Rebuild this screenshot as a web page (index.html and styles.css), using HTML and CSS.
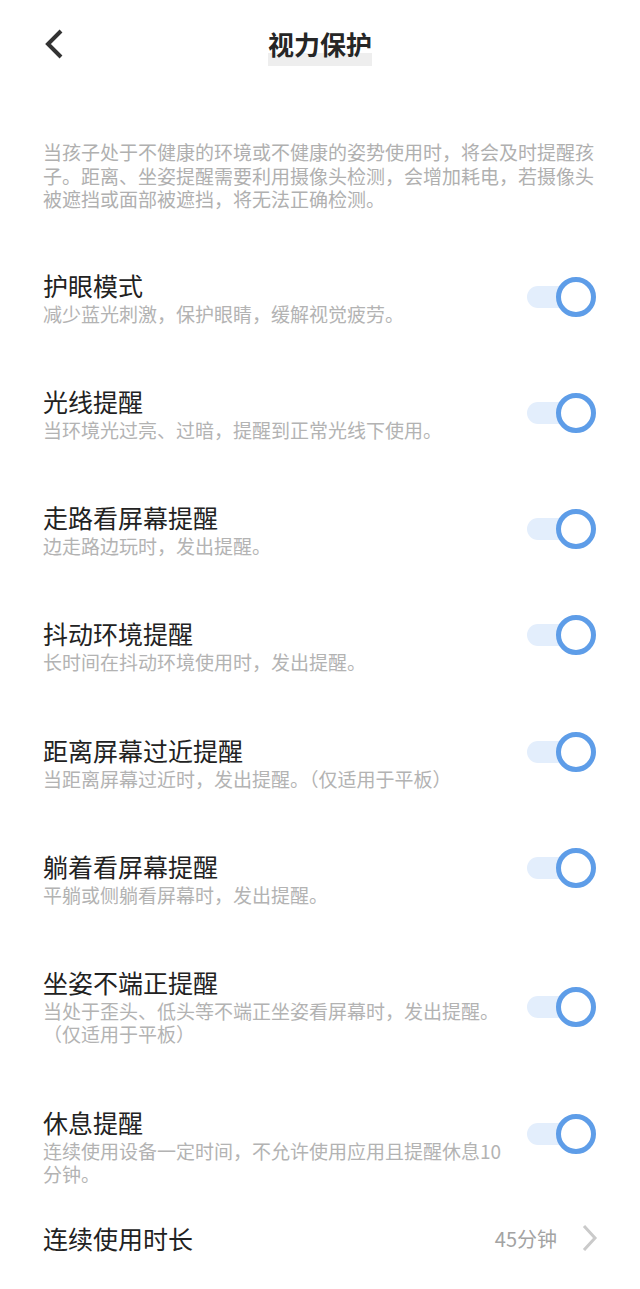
FILE: index.html
```html
<!DOCTYPE html>
<html>
<head>
    <title>视力保护</title>
    <link rel="stylesheet" href="styles.css">
</head>
<body>
    <div class="header">
        <div class="back">
            <svg width="24" height="32" viewBox="0 0 24 32"><polyline points="19,3 6,16 19,29" fill="none" stroke="#333" stroke-width="4"/></svg>
        </div>
        <h1 class="title">视力保护</h1>
        <div></div>
    </div>

    <p class="intro">当孩子处于不健康的环境或不健康的姿势使用时，将会及时提醒孩子。距离、坐姿提醒需要利用摄像头检测，会增加耗电，若摄像头被遮挡或面部被遮挡，将无法正确检测。</p>

    <div class="list">
        <div class="item">
            <div class="text">
                <div class="name">护眼模式</div>
                <div class="desc">减少蓝光刺激，保护眼睛，缓解视觉疲劳。</div>
            </div>
            <svg class="toggle" width="70" height="40" viewBox="0 0 70 40"><rect x="1" y="9" width="55" height="22" rx="11" fill="#e3eefc"/><circle cx="50" cy="20" r="17.5" fill="#fff" stroke="#5e9de8" stroke-width="5"/></svg>
        </div>
        <div class="item">
            <div class="text">
                <div class="name">光线提醒</div>
                <div class="desc">当环境光过亮、过暗，提醒到正常光线下使用。</div>
            </div>
            <svg class="toggle" width="70" height="40" viewBox="0 0 70 40"><rect x="1" y="9" width="55" height="22" rx="11" fill="#e3eefc"/><circle cx="50" cy="20" r="17.5" fill="#fff" stroke="#5e9de8" stroke-width="5"/></svg>
        </div>
        <div class="item">
            <div class="text">
                <div class="name">走路看屏幕提醒</div>
                <div class="desc">边走路边玩时，发出提醒。</div>
            </div>
            <svg class="toggle" width="70" height="40" viewBox="0 0 70 40"><rect x="1" y="9" width="55" height="22" rx="11" fill="#e3eefc"/><circle cx="50" cy="20" r="17.5" fill="#fff" stroke="#5e9de8" stroke-width="5"/></svg>
        </div>
        <div class="item">
            <div class="text">
                <div class="name">抖动环境提醒</div>
                <div class="desc">长时间在抖动环境使用时，发出提醒。</div>
            </div>
            <svg class="toggle toggle-up" width="70" height="40" viewBox="0 0 70 40"><rect x="1" y="9" width="55" height="22" rx="11" fill="#e3eefc"/><circle cx="50" cy="20" r="17.5" fill="#fff" stroke="#5e9de8" stroke-width="5"/></svg>
        </div>
        <div class="item">
            <div class="text">
                <div class="name">距离屏幕过近提醒</div>
                <div class="desc">当距离屏幕过近时，发出提醒。（仅适用于平板）</div>
            </div>
            <svg class="toggle toggle-up" width="70" height="40" viewBox="0 0 70 40"><rect x="1" y="9" width="55" height="22" rx="11" fill="#e3eefc"/><circle cx="50" cy="20" r="17.5" fill="#fff" stroke="#5e9de8" stroke-width="5"/></svg>
        </div>
        <div class="item">
            <div class="text">
                <div class="name">躺着看屏幕提醒</div>
                <div class="desc">平躺或侧躺看屏幕时，发出提醒。</div>
            </div>
            <svg class="toggle toggle-up" width="70" height="40" viewBox="0 0 70 40"><rect x="1" y="9" width="55" height="22" rx="11" fill="#e3eefc"/><circle cx="50" cy="20" r="17.5" fill="#fff" stroke="#5e9de8" stroke-width="5"/></svg>
        </div>
        <div class="item">
            <div class="text">
                <div class="name">坐姿不端正提醒</div>
                <div class="desc">当处于歪头、低头等不端正坐姿看屏幕时，发出提醒。（仅适用于平板）</div>
            </div>
            <svg class="toggle toggle-down" width="70" height="40" viewBox="0 0 70 40"><rect x="1" y="9" width="55" height="22" rx="11" fill="#e3eefc"/><circle cx="50" cy="20" r="17.5" fill="#fff" stroke="#5e9de8" stroke-width="5"/></svg>
        </div>
        <div class="item">
            <div class="text">
                <div class="name">休息提醒</div>
                <div class="desc">连续使用设备一定时间，不允许使用应用且提醒休息10分钟。</div>
            </div>
            <svg class="toggle" width="70" height="40" viewBox="0 0 70 40"><rect x="1" y="9" width="55" height="22" rx="11" fill="#e3eefc"/><circle cx="50" cy="20" r="17.5" fill="#fff" stroke="#5e9de8" stroke-width="5"/></svg>
        </div>
    </div>

    <div class="duration">
        <div class="name">连续使用时长</div>
        <div class="value">
            <span>45分钟</span>
            <svg width="18" height="28" viewBox="0 0 18 28"><polyline points="4,2 15,14 4,26" fill="none" stroke="#cacaca" stroke-width="3"/></svg>
        </div>
    </div>
</body>
</html>
```

FILE: styles.css
```css
body {
    margin: 0;
    background: #fff;
    font-family: "Noto Sans CJK SC", "Noto Sans", sans-serif;
    color: #222;
}

/* top bar */
.header {
    display: grid;
    grid-template-columns: 1fr auto 1fr;
    align-items: center;
    height: 88px;
}
.back {
    padding-left: 42px;
    display: flex;
    align-items: center;
}
.title {
    margin: 0;
    font-size: 26px;
    font-weight: bold;
    line-height: 30px;
    padding-bottom: 7px;
    color: #262626;
    background: linear-gradient(to bottom, transparent 24px, #eeeeee 24px);
    position: relative;
    top: 3px;
}

.intro {
    margin: 52px 0 0;
    padding: 0 43px;
    font-size: 19px;
    line-height: 23.5px;
    color: #b0b0b0;
}

/* switches list */
.list {
    display: flex;
    flex-direction: column;
    gap: 61.33px;
    margin-top: 59px;
}
.item {
    display: flex;
    align-items: flex-start;
    justify-content: space-between;
    padding: 0 44px 0 43px;
}
.text {
    width: 464px;
}
.name {
    font-size: 25px;
    line-height: 30px;
    color: #222;
}
.desc {
    margin-top: 2px;
    font-size: 19px;
    line-height: 23px;
    color: #b3b3b3;
}
.toggle {
    flex-shrink: 0;
    margin-top: 7px;
}
.toggle-up {
    margin-top: -3px;
}
.toggle-down {
    margin-top: 20px;
}

.duration {
    display: flex;
    align-items: center;
    justify-content: space-between;
    margin-top: 38.7px;
    padding: 0 42px 0 43px;
}
.value {
    display: flex;
    align-items: center;
    gap: 23px;
    font-size: 20px;
    color: #a3a3a3;
}
.value svg {
    display: block;
}
```
